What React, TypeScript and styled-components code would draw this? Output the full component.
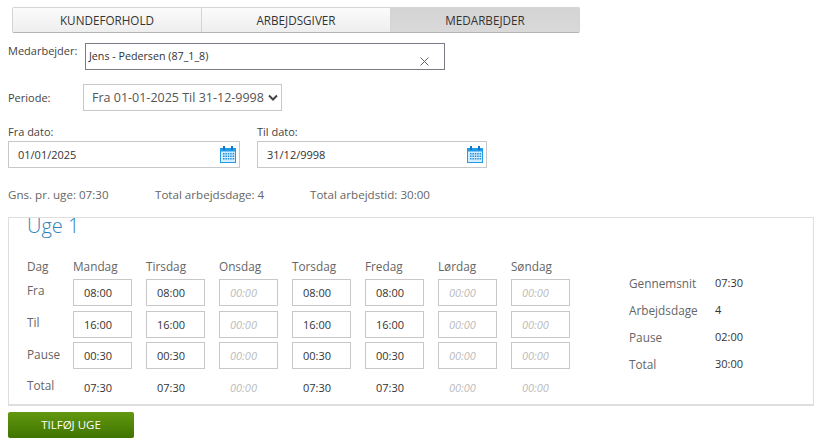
import { Fragment } from "react";
import styled, { createGlobalStyle } from "styled-components";

const Global = createGlobalStyle`
  html, body { margin: 0; padding: 0; background: #fff; }
  body { font-family: "Open Sans", "Liberation Sans", sans-serif; font-size: 12px; color: #555; }
`;

const Page = styled.div`
  width: 821px;
  height: 443px;
  padding: 7px 7px 0 8px;
  box-sizing: border-box;
  overflow: hidden;
`;

const Tabs = styled.div`
  display: grid;
  grid-template-columns: 188px 189px 1fr;
  margin-left: 4px;
  width: 568px;
  height: 26px;
  box-sizing: border-box;
  border: 1px solid #d4d4d4;
  border-bottom-color: #b4b4b4;
  border-radius: 2px;
`;

const Tab = styled.div<{ $active?: boolean }>`
  display: flex;
  align-items: center;
  justify-content: center;
  font-size: 11.7px;
  color: #333;
  background: ${(p) => (p.$active ? "linear-gradient(#d4d4d4, #d9d9d9)" : "linear-gradient(#fbfbfb, #eeeeee)")};
  & + & { border-left: 1px solid #d4d4d4; }
`;

const EmployeeRow = styled.div`
  display: flex;
  margin-top: 10px;
`;

const EmployeeLabel = styled.label`
  width: 77px;
  font-size: 11px;
  line-height: 15px;
  color: #444;
`;

const EmployeeBox = styled.div`
  position: relative;
  width: 360px;
  height: 27px;
  box-sizing: border-box;
  border: 1px solid #7b7b85;
  padding: 5px 3px;
  font-size: 10.7px;
  line-height: 15px;
  color: #333;
`;

const Clear = styled.svg`
  position: absolute;
  right: 15px;
  top: 13px;
  width: 9px;
  height: 9px;
`;

const PeriodRow = styled.div`
  display: flex;
  align-items: center;
  margin-top: 14px;
`;

const PeriodLabel = styled.label`
  width: 75px;
  font-size: 11px;
  color: #444;
`;

const PeriodSelect = styled.div`
  display: flex;
  align-items: center;
  justify-content: space-between;
  width: 199px;
  height: 27px;
  box-sizing: border-box;
  border: 1px solid #c8c8c8;
  padding: 0 3px 0 8px;
  font-size: 12.5px;
  color: #555;
  white-space: nowrap;
`;

const Chevron = styled.svg`
  width: 10px;
  height: 7px;
`;

const DateRow = styled.div`
  display: flex;
  gap: 17px;
  margin-top: 13px;
`;

const DateField = styled.div<{ $w: number }>`
  width: ${(p) => p.$w}px;
`;

const DateLabel = styled.label`
  display: block;
  font-size: 11px;
  line-height: 15px;
  color: #444;
`;

const DateBox = styled.div`
  display: flex;
  align-items: center;
  justify-content: space-between;
  height: 27px;
  margin-top: 2px;
  box-sizing: border-box;
  border: 1px solid #c8c8c8;
  padding: 0 3px 0 9px;
  font-size: 11px;
  color: #333;
`;

const Totals = styled.div`
  display: flex;
  margin-top: 19px;
  height: 16px;
  font-size: 11.6px;
  line-height: 16px;
  color: #666;
`;

const TotalItem = styled.span<{ $w: number }>`
  width: ${(p) => p.$w}px;
`;

const Panel = styled.div`
  margin-top: 14px;
  width: 806px;
  height: 189px;
  box-sizing: border-box;
  border: 1px solid #dedede;
  border-bottom-width: 2px;
  padding: 0 0 0 18px;
`;

const Heading = styled.h2`
  margin: 0;
  font-size: 20px;
  font-weight: 300;
  line-height: 16px;
  color: #2f7fb8;
`;

const Body = styled.div`
  display: flex;
  margin-top: 24px;
`;

const Schedule = styled.div`
  display: grid;
  grid-template-columns: 32.4px repeat(7, 59.4px);
  column-gap: 13.6px;
  grid-template-rows: 21px 27px 32px 31px 32px;
  width: 544px;
`;

const RowHead = styled.div<{ $offset?: number }>`
  font-size: 11.8px;
  line-height: 16px;
  color: #666;
  margin-top: ${(p) => p.$offset ?? 0}px;
`;

const DayHead = styled.div`
  font-size: 11.8px;
  line-height: 16px;
  color: #666;
`;

const TimeCell = styled.div<{ $empty?: boolean; $top?: number }>`
  height: 27px;
  box-sizing: border-box;
  border: 1px solid #c8c8c8;
  margin-top: ${(p) => p.$top ?? 0}px;
  padding-left: 10px;
  display: flex;
  align-items: center;
  font-size: 11px;
  color: ${(p) => (p.$empty ? "#bbb" : "#333")};
  font-style: ${(p) => (p.$empty ? "italic" : "normal")};
`;

const TotalCell = styled.div<{ $empty?: boolean }>`
  padding: 11px 0 0 11px;
  font-size: 11px;
  line-height: 15px;
  color: ${(p) => (p.$empty ? "#bbb" : "#333")};
  font-style: ${(p) => (p.$empty ? "italic" : "normal")};
`;

const Summary = styled.div`
  display: grid;
  grid-template-columns: 86px 40px;
  grid-auto-rows: 27px;
  align-items: center;
  margin: 11px 0 0 58px;
  align-self: flex-start;
  font-size: 11px;
`;

const SummaryLabel = styled.span`
  font-size: 11.8px;
  color: #666;
`;

const SummaryValue = styled.span`
  color: #333;
`;

const AddButton = styled.button`
  display: block;
  margin-top: 6px;
  width: 126px;
  height: 26px;
  border: 0;
  border-radius: 2px;
  background: linear-gradient(#62980f, #3f7400);
  color: #fff;
  font-family: inherit;
  font-size: 11.5px;
  padding: 0 0 2px;
`;

const CalendarSvg = styled.svg`
  width: 16px;
  height: 17px;
  flex: none;
`;

function CalendarIcon() {
  return (
    <CalendarSvg viewBox="0 0 16 17">
      <rect x="0.5" y="2.5" width="15" height="14" fill="#d4eefe" stroke="#1f9bea" />
      <rect x="1" y="2.5" width="14" height="3" fill="#1f9bea" />
      <rect x="3" y="0" width="2" height="4" fill="#1478c0" />
      <rect x="11" y="0" width="2" height="4" fill="#1478c0" />
      <g fill="#1f8fdc">
        {[7, 9.5, 12].map((y) =>
          [3, 5.4, 7.8, 10.2, 12.6].map((x) => <rect key={`${x}-${y}`} x={x} y={y} width="1.5" height="1.5" />)
        )}
      </g>
    </CalendarSvg>
  );
}

const days = [
  { name: "Mandag", on: true },
  { name: "Tirsdag", on: true },
  { name: "Onsdag", on: false },
  { name: "Torsdag", on: true },
  { name: "Fredag", on: true },
  { name: "Lørdag", on: false },
  { name: "Søndag", on: false },
];

const rows = [
  { label: "Fra", value: "08:00", offset: 3, top: 0 },
  { label: "Til", value: "16:00", offset: 8, top: 5 },
  { label: "Pause", value: "00:30", offset: 8, top: 4 },
];

export default function App() {
  return (
    <Page>
      <Global />
      <Tabs>
        <Tab>KUNDEFORHOLD</Tab>
        <Tab>ARBEJDSGIVER</Tab>
        <Tab $active>MEDARBEJDER</Tab>
      </Tabs>

      <EmployeeRow>
        <EmployeeLabel>Medarbejder:</EmployeeLabel>
        <EmployeeBox>
          Jens - Pedersen (87_1_8)
          <Clear viewBox="0 0 9 9">
            <path d="M0.5 0.5 L8.5 8.5 M8.5 0.5 L0.5 8.5" stroke="#666" strokeWidth="1" fill="none" />
          </Clear>
        </EmployeeBox>
      </EmployeeRow>

      <PeriodRow>
        <PeriodLabel>Periode:</PeriodLabel>
        <PeriodSelect>
          Fra 01-01-2025 Til 31-12-9998
          <Chevron viewBox="0 0 10 7">
            <path d="M1 1.5 L5 5.5 L9 1.5" stroke="#444" strokeWidth="2" fill="none" />
          </Chevron>
        </PeriodSelect>
      </PeriodRow>

      <DateRow>
        <DateField $w={232}>
          <DateLabel>Fra dato:</DateLabel>
          <DateBox>
            01/01/2025
            <CalendarIcon />
          </DateBox>
        </DateField>
        <DateField $w={230}>
          <DateLabel>Til dato:</DateLabel>
          <DateBox>
            31/12/9998
            <CalendarIcon />
          </DateBox>
        </DateField>
      </DateRow>

      <Totals>
        <TotalItem $w={147}>Gns. pr. uge: 07:30</TotalItem>
        <TotalItem $w={155}>Total arbejdsdage: 4</TotalItem>
        <TotalItem $w={200}>Total arbejdstid: 30:00</TotalItem>
      </Totals>

      <Panel>
        <Heading>Uge 1</Heading>
        <Body>
          <Schedule>
            <RowHead>Dag</RowHead>
            {days.map((d) => (
              <DayHead key={d.name}>{d.name}</DayHead>
            ))}
            {rows.map((r) => (
              <Fragment key={r.label}>
                <RowHead $offset={r.offset}>{r.label}</RowHead>
                {days.map((d) => (
                  <TimeCell key={d.name} $empty={!d.on} $top={r.top}>
                    {d.on ? r.value : "00:00"}
                  </TimeCell>
                ))}
              </Fragment>
            ))}
            <RowHead $offset={8}>Total</RowHead>
            {days.map((d) => (
              <TotalCell key={d.name} $empty={!d.on}>
                {d.on ? "07:30" : "00:00"}
              </TotalCell>
            ))}
          </Schedule>
          <Summary>
            <SummaryLabel>Gennemsnit</SummaryLabel>
            <SummaryValue>07:30</SummaryValue>
            <SummaryLabel>Arbejdsdage</SummaryLabel>
            <SummaryValue>4</SummaryValue>
            <SummaryLabel>Pause</SummaryLabel>
            <SummaryValue>02:00</SummaryValue>
            <SummaryLabel>Total</SummaryLabel>
            <SummaryValue>30:00</SummaryValue>
          </Summary>
        </Body>
      </Panel>

      <AddButton>TILFØJ UGE</AddButton>
    </Page>
  );
}
